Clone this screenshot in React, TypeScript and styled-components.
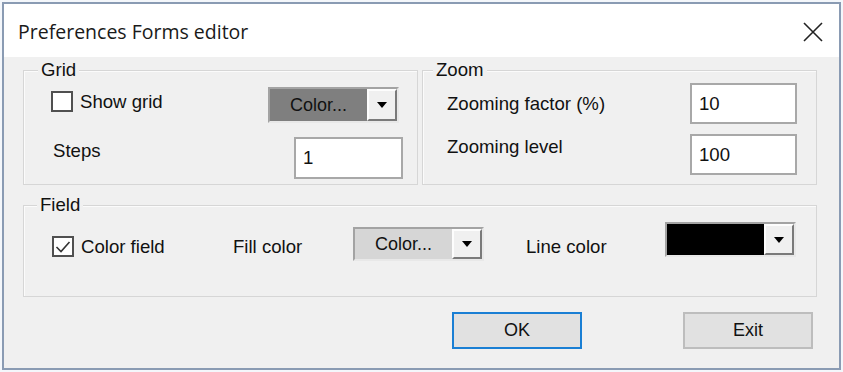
import React from "react";
import styled, { createGlobalStyle } from "styled-components";

const GlobalStyle = createGlobalStyle`
    html, body {
        margin: 0;
        padding: 0;
        background: #f4f7fb;
    }

    body {
        font-family: "Liberation Sans", Arial, sans-serif;
        color: #111;
    }

    * {
        box-sizing: border-box;
    }
`;

const Screen = styled.div`
    width: 843px;
    height: 372px;
    padding: 2px;
`;

const Window = styled.div`
    width: 839px;
    height: 368px;
    display: flex;
    flex-direction: column;
    border: 2px solid #8a9bb3;
    background: #f0f0f0;
`;

const TitleBar = styled.div`
    height: 53px;
    display: flex;
    align-items: center;
    justify-content: space-between;
    padding: 2px 15px 0 14px;
    background: #fff;
`;

const Title = styled.span`
    font-family: "Open Sans", "Noto Sans", sans-serif;
    font-size: 19.5px;
    color: #1a1a1a;
`;

const CloseButton = styled.button`
    width: 22px;
    height: 22px;
    padding: 0;
    border: none;
    background: transparent;
    display: flex;
    align-items: center;
    justify-content: center;
`;

const Body = styled.div`
    flex: 1;
    display: flex;
    flex-direction: column;
    padding: 13px 22px 0 19px;
`;

const TopRow = styled.div`
    display: flex;
    gap: 4px;
`;

const Group = styled.div<{ $width: number; $pad: string }>`
    width: ${(p) => p.$width}px;
    border: 1px solid #d6d6d6;
    box-shadow: inset 1px 1px 0 #fbfbfb;
    padding: ${(p) => p.$pad};
    display: flex;
    flex-direction: column;
`;

const Legend = styled.div<{ $indent: number }>`
    width: fit-content;
    margin: -11px 0 0 ${(p) => p.$indent}px;
    padding: 0 3px;
    background: #f0f0f0;
    font-size: 18.6px;
    line-height: 20px;
    height: 20px;
`;

const Row = styled.div<{ $top: number }>`
    display: flex;
    align-items: flex-start;
    justify-content: space-between;
    margin-top: ${(p) => p.$top}px;
`;

const Label = styled.span<{ $dy?: number; $w?: number; $left?: number }>`
    font-size: 18.6px;
    line-height: 21px;
    margin-top: ${(p) => p.$dy ?? 0}px;
    margin-left: ${(p) => p.$left ?? 0}px;
    width: ${(p) => (p.$w ? `${p.$w}px` : "auto")};
    flex-shrink: 0;
`;

const CheckField = styled.label<{ $dy: number; $w?: number }>`
    display: flex;
    align-items: center;
    gap: 7px;
    margin-top: ${(p) => p.$dy}px;
    width: ${(p) => (p.$w ? `${p.$w}px` : "auto")};
    flex-shrink: 0;
    font-size: 18.6px;
    line-height: 21px;
`;

const CheckBox = styled.span`
    width: 22px;
    height: 21px;
    border: 2px solid #505050;
    background: #fff;
    display: flex;
    align-items: center;
    justify-content: center;
`;

const Combo = styled.div<{ $w: number; $h: number; $dy?: number; $right?: number }>`
    width: ${(p) => p.$w}px;
    height: ${(p) => p.$h}px;
    margin-top: ${(p) => p.$dy ?? 0}px;
    margin-right: ${(p) => p.$right ?? 0}px;
    display: flex;
    flex-shrink: 0;
    border: 2px solid;
    border-color: #a3a3a3 #e8e8e8 #e8e8e8 #a3a3a3;
`;

const Swatch = styled.div<{ $fill: string }>`
    flex: 1;
    background: ${(p) => p.$fill};
    display: flex;
    align-items: center;
    justify-content: center;
    font-size: 18px;
    color: #111;
    padding-top: 1px;
`;

const ArrowButton = styled.div`
    width: 30px;
    background: #f0f0f0;
    border: 2px solid;
    border-color: #fdfdfd #7a7a7a #7a7a7a #fdfdfd;
    display: flex;
    align-items: center;
    justify-content: center;

    &::after {
        content: "";
        border-left: 5px solid transparent;
        border-right: 5px solid transparent;
        border-top: 6px solid #000;
    }
`;

const TextBox = styled.input<{ $w: number; $h: number }>`
    width: ${(p) => p.$w}px;
    height: ${(p) => p.$h}px;
    margin: 0;
    border: 2px solid #a8a8a8;
    background: #fff;
    padding: 0 0 0 7px;
    font-family: "Liberation Sans", Arial, sans-serif;
    font-size: 18.6px;
    color: #111;
    outline: none;
    flex-shrink: 0;
`;

const FieldRow = styled.div`
    display: flex;
    align-items: flex-start;
    margin-top: 7px;
`;

const ButtonRow = styled.div`
    display: flex;
    justify-content: flex-end;
    gap: 101px;
    margin-top: 15px;
    padding-right: 4px;
`;

const DialogButton = styled.button<{ $primary?: boolean }>`
    width: 130px;
    height: 37px;
    background: #e1e1e1;
    border: 2px solid ${(p) => (p.$primary ? "#1a7fd4" : "#bdbdbd")};
    font-family: "Liberation Sans", Arial, sans-serif;
    font-size: 18px;
    color: #111;
    padding: 0;
`;

function CloseIcon() {
    return (
        <svg width="20" height="20" viewBox="0 0 20 20">
            <path d="M1 1 L19 19 M19 1 L1 19" stroke="#222" strokeWidth="1.6" fill="none" />
        </svg>
    );
}

function CheckMark() {
    return (
        <svg width="16" height="14" viewBox="0 0 16 14">
            <path d="M1.5 7 L6 11.5 L14.5 2" stroke="#333" strokeWidth="1.6" fill="none" />
        </svg>
    );
}

function ColorCombo(props: { w: number; h: number; fill: string; text?: string; dy?: number; right?: number }) {
    return (
        <Combo $w={props.w} $h={props.h} $dy={props.dy} $right={props.right}>
            <Swatch $fill={props.fill}>{props.text}</Swatch>
            <ArrowButton />
        </Combo>
    );
}

export default function App() {
    return (
        <>
            <GlobalStyle />
            <Screen>
                <Window>
                    <TitleBar>
                        <Title>Preferences Forms editor</Title>
                        <CloseButton aria-label="Close">
                            <CloseIcon />
                        </CloseButton>
                    </TitleBar>

                    <Body>
                        <TopRow>
                            <Group $width={395} $pad="0 14px 5px 27px">
                                <Legend $indent={-13}>Grid</Legend>
                                <Row $top={7}>
                                    <CheckField $dy={4}>
                                        <CheckBox />
                                        Show grid
                                    </CheckField>
                                    <ColorCombo w={131} h={36} fill="#7f7f7f" text="Color..." right={4} />
                                </Row>
                                <Row $top={14}>
                                    <Label $dy={3} $left={2}>Steps</Label>
                                    <TextBox $w={109} $h={42} defaultValue="1" />
                                </Row>
                            </Group>

                            <Group $width={395} $pad="0 19px 9px 24px">
                                <Legend $indent={-14}>Zoom</Legend>
                                <Row $top={3}>
                                    <Label $dy={10}>Zooming factor (%)</Label>
                                    <TextBox $w={107} $h={41} defaultValue="10" />
                                </Row>
                                <Row $top={10}>
                                    <Label $dy={2}>Zooming level</Label>
                                    <TextBox $w={107} $h={41} defaultValue="100" />
                                </Row>
                            </Group>
                        </TopRow>

                        <Group $width={794} $pad="0 20px 35px 28px" style={{ marginTop: 20 }}>
                            <Legend $indent={-15}>Field</Legend>
                            <FieldRow>
                                <CheckField $dy={14} $w={181}>
                                    <CheckBox>
                                        <CheckMark />
                                    </CheckBox>
                                    Color field
                                </CheckField>
                                <Label $dy={14} $w={120}>Fill color</Label>
                                <ColorCombo w={131} h={34} fill="#d6d6d6" text="Color..." dy={5} />
                                <Label $dy={14} $w={139} $left={42}>Line color</Label>
                                <ColorCombo w={131} h={35} fill="#000" />
                            </FieldRow>
                        </Group>

                        <ButtonRow>
                            <DialogButton $primary>OK</DialogButton>
                            <DialogButton>Exit</DialogButton>
                        </ButtonRow>
                    </Body>
                </Window>
            </Screen>
        </>
    );
}
